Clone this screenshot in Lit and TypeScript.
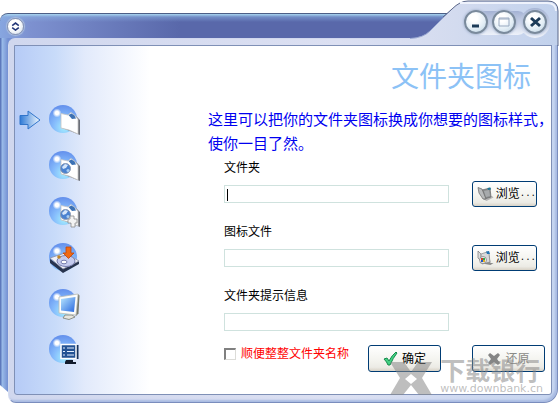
import { LitElement, html, css, svg } from "lit";
import { customElement, state } from "lit/decorators.js";

const doc = svg`
  <path d="M14 11l8 0l3 -1l4 3l3 3v15l-10 -4l-8 -3z" fill="#6b6f78"/>
  <path d="M13 9.500l7 1.500l3 -2.500l4 3l3 4v14.500l-9 -4l-8 -2z" fill="#fff" stroke="#c4c4c4" stroke-width=".8"/>
  <path d="M20.500 11l3 -1.500l3 2l1.500 3l-4 .5z" fill="#3c71b4"/>`;

const lens = svg`
  <circle cx="17.500" cy="18.500" r="5" fill="#4a82d0" stroke="#8d9bb4"/>
  <path d="M14 17l3 -3l3 1l-2 3l-3 1z" fill="#d5e6fa"/>
  <circle cx="20" cy="20.500" r="1.500" fill="#a8cdf2"/>`;

const pictures = [
  doc,
  svg`${doc}${lens}`,
  svg`${doc}${lens}
    <path d="M22 20h4v3h3v4h-2v4h-4v-4h-3v-4h2z" fill="#f3f3f3" stroke="#8a8a8a" stroke-width=".8"/>`,
  svg`
    <path d="M2 17l13 9l16 -7v3l-16 9l-13 -10z" fill="#28344e"/>
    <path d="M2 16l15 -5l14 8l-16 8z" fill="#f0f1f7" stroke="#8b90a8" stroke-width=".8"/>
    <ellipse cx="18" cy="19" rx="9" ry="5.500" fill="#c5cbee" stroke="#777eae"/>
    <ellipse cx="16" cy="20" rx="3" ry="1.800" fill="#fff" stroke="#777eae"/>
    <circle cx="11" cy="15" r="1.800" fill="#bc8428"/>
    <path d="M18 5h5v6h3l-5.500 5.500l-5.500 -5.500h3z" fill="#ef6a15" stroke="#c0440a" stroke-width=".8"/>`,
  svg`
    <path d="M30 6l1.500 1.500l-1 18l-3 3z" fill="#777a70"/>
    <path d="M17 27h7l3 2l-6 2.500l-6 -1.500z" fill="#e6e6df" stroke="#777a70" stroke-width=".8"/>
    <path d="M11 9l19 -3l-2 21l-17 -2z" fill="#fdfdfb" stroke="#bbbdb4" stroke-width=".8"/>
    <path d="M13 11l14.500 -2l-1.500 15l-13 -1.500z" fill="url(#screen)"/>`,
  svg`
    <path d="M28 11h2.500v14h-3z" fill="#17325c"/>
    <path d="M18 26h7v2h3v2h-11v-2z" fill="#111b2c"/>
    <rect x="13" y="10.500" width="15" height="14" fill="#245394" stroke="#fff" stroke-width="1.500"/>
    <path d="M15 14h2M15 17.500h2M15 21h2M19 14h7M19 17.500h7M19 21h7" stroke="#e4f0ff" stroke-width="1.200"/>`,
];

const names = ["文件夹", "图标", "图标文件", "安装", "桌面", "列表"];

@customElement("app-root")
export class AppRoot extends LitElement {
  @state() private step = 0;

  static styles = css`
    :host {
      display: block;
      background: #fff;
      color: #000;
      font: 12px/16px "Liberation Sans", "Noto Sans CJK SC", sans-serif;
    }
    * { box-sizing: border-box; }
    svg { display: block; flex: none; }
    button { font: inherit; color: inherit; padding: 0; border: 0; background: none; }
    .window {
      position: relative;
      min-height: 100vh;
      padding: 0 1px 0 8px;
      display: flex;
      flex-direction: column;
    }
    .rail {
      position: absolute;
      left: 0;
      top: 20px;
      bottom: 11px;
      width: 24px;
      background: linear-gradient(90deg, #5d79bc 0 1px, #9bbdea 2px, #738fd2 8px);
      clip-path: polygon(0 0, 100% 0, 100% 100%, 8px 100%, 0 calc(100% - 7px));
    }
    .titlebar {
      position: relative;
      height: 38px;
      margin: 0 -1px 0 -8px;
      padding-top: 13px;
      display: flex;
    }
    .strip {
      flex: 1;
      height: 25px;
      margin-right: 60px;
      padding: 4px 7px;
      border-top: 1px solid #4d5f87;
      border-radius: 8px 0 0 0;
      background:
        linear-gradient(#a9d5f0 0, #8ab1e180 3px, #8ab1e100 8px),
        linear-gradient(90deg, #87a6e0, #7d91d0 30px, #5968aa 180px);
    }
    .menu {
      display: grid;
      place-items: center;
      width: 17px;
      height: 17px;
      border-radius: 50%;
      border: 1px solid #8995b3;
      background: radial-gradient(circle at 40% 35%, #fff 40%, #cad8e8);
      box-shadow: 0 0 1px 1px #adc0df;
    }
    .tab { position: absolute; right: 0; top: 0; width: 159px; height: 46px; }
    .controls {
      position: absolute;
      right: 12px;
      top: 10px;
      display: flex;
      align-items: center;
      gap: 4px;
    }
    .round {
      display: grid;
      place-items: center;
      width: 24px;
      height: 24px;
      border-radius: 50%;
      border: 2px solid #7a8a9c;
      background: radial-gradient(circle at 40% 30%, #fff 20%, #e2edf5 60%, #b9d0e0);
      box-shadow: 0 0 2px 1px #b2bfd8;
    }
    .close { margin-left: 3px; }
    .frame {
      position: relative;
      flex: 1;
      display: flex;
      padding: 6px 5px 7px;
      border: 1px solid #7a8dbd;
      border-top-color: #d0d7ee;
      border-left-color: #d4dcf0;
      border-radius: 7px 0 14px 8px;
      background: linear-gradient(90deg, #d0d7ee, #dce0f2 60%, #c6d5f0);
      box-shadow: inset -2px -2px 2px #a9bbe2;
    }
    .panel {
      flex: 1;
      min-width: 0;
      display: flex;
      border: 1px solid #7f90b6;
      border-radius: 0 0 3px 3px;
      background: linear-gradient(90deg, #b6cbf6, #c8dbf9 40px, #e2eafb 70px, #f4f7fe 110px, #fff 135px);
    }
    .steps { flex: 0 0 130px; padding: 58px 0 10px 4px; }
    .list { list-style: none; margin: 0; padding: 0; display: grid; gap: 14px; }
    .item { display: grid; grid-template-columns: 22px 32px; gap: 7px; align-items: center; height: 32px; }
    .pick { grid-column: 2; width: 32px; height: 32px; }
    .main { flex: 1; min-width: 0; padding: 14px 14px 21px 63px; }
    .title {
      margin: 0 6px 0 0;
      font-size: 28px;
      line-height: 36px;
      font-weight: 400;
      text-align: right;
      color: #8cc2f6;
    }
    .intro { margin: 12px -16px 4px 0; font-size: 15px; line-height: 24px; color: #0000f0; }
    .form { display: grid; grid-template-columns: minmax(0, 1fr); gap: 17px; padding-left: 16px; }
    .field { display: grid; gap: 5px; }
    .row { display: flex; align-items: center; justify-content: space-between; gap: 23px; height: 26px; }
    .text {
      flex: 1;
      min-width: 0;
      height: 18px;
      padding: 0 4px;
      border: 1px solid #cfe2de;
      background: #fff;
      font: inherit;
      outline: 0;
    }
    .current { background: linear-gradient(#000, #000) 2px 3px / 1px 12px no-repeat #fff; }
    .last { padding-right: 88px; }
    .push {
      display: flex;
      align-items: center;
      justify-content: center;
      gap: 4px;
      height: 26px;
      border: 1px solid #003c74;
      border-radius: 3px;
      background: linear-gradient(#fff, #f3f3ee 60%, #ecebe5 85%, #d8d2c6);
      white-space: nowrap;
    }
    .browse { flex: 0 0 65px; justify-content: flex-start; gap: 2px; padding-left: 4px; }
    .caption { display: flex; align-items: center; }
    .dots { font: 9px/16px "Liberation Mono", monospace; }
    .footer { display: flex; align-items: center; margin: -7px -8px 0 0; }
    .wide { flex: 0 0 73px; height: 27px; }
    .wide + .wide { margin-left: 31px; }
    .wide:disabled { color: #8b8b87; }
    .check { flex: 1; display: flex; align-items: center; gap: 5px; color: #f00; height: 27px; padding-bottom: 10px; }
    .box {
      appearance: none;
      flex: none;
      width: 12px;
      height: 12px;
      margin: 0;
      border: 1px solid #dcdcd8;
      border-top: 2px solid #808080;
      border-left: 2px solid #808080;
      background: #fff;
    }
    .box:checked { background: #444; }
    .brand {
      position: absolute;
      right: 16px;
      bottom: 8px;
      display: flex;
      align-items: center;
      gap: 8px;
      color: #8888888c;
      pointer-events: none;
    }
    .name { font-size: 25px; line-height: 21px; font-weight: 700; }
    .site { font: 11px/13px "DejaVu Sans", sans-serif; }
  `;

  private ball(i: number) {
    return html`<svg width="32" height="32" viewBox="0 0 32 32" aria-hidden="true">
      <defs>
        <radialGradient id="ball" cx=".55" cy=".8" r=".85">
          <stop offset="0" stop-color="#a4efff" />
          <stop offset=".45" stop-color="#86bcfc" />
          <stop offset="1" stop-color="#5f8aea" />
        </radialGradient>
        <radialGradient id="shine">
          <stop offset=".4" stop-color="#fff" />
          <stop offset="1" stop-color="#fff" stop-opacity="0" />
        </radialGradient>
        <linearGradient id="screen" x2="1" y2="1">
          <stop offset="0" stop-color="#b8e6ff" />
          <stop offset="1" stop-color="#2868df" />
        </linearGradient>
      </defs>
      <circle cx="15" cy="15" r="14" fill="url(#ball)" />
      <circle cx="9" cy="9" r="4.5" fill="url(#shine)" />
      ${pictures[i]}
    </svg>`;
  }

  private folder(image: boolean) {
    return html`<svg width="17" height="16" viewBox="0 0 17 16" aria-hidden="true">
      ${image
        ? svg`<path d="M12 3l1.500 10l3 0l-3 2l-11 -2z" fill="#8b8b8b"/>
            <path d="M1 1l3 3v7l-3 -3z" fill="#ddd" stroke="#777" stroke-width=".7"/>
            <path d="M4 4l6 -2l2 2l1 8l-8 2z" fill="#d8dadb" stroke="#888" stroke-width=".7"/>
            <path d="M9 1.500l3 -.5l1 3l-3 0z" fill="#2273b0"/>
            <circle cx="6" cy="10" r="3.500" fill="#eee" stroke="#777" stroke-width=".7"/>
            <path d="M4 8h2v2h-2z" fill="#d03a2a"/><path d="M6 8h2v2h-2z" fill="#2eaa4c"/>
            <path d="M4 10h2v2h-2z" fill="#2658c4"/><path d="M6 10h2v2h-2z" fill="#e0b020"/>`
        : svg`<path d="M6 13l9 -3l1.500 1.500l-7 3.500z" fill="#b5b5b5"/>
            <path d="M5 4l8 -2l1 9l-7 2z" fill="#8a8d8e" stroke="#666" stroke-width=".7"/>
            <path d="M1 1.500l4 1.500l4 10l-3 0l-4 -6z" fill="#b9bbbc" stroke="#666" stroke-width=".7"/>
            <path d="M7 5l5 -1l1 6l-4 1z" fill="#a7aaac"/>
            <path d="M10.500 2l3 -.5l.5 2l-3 .5z" fill="#1b7698"/>`}
    </svg>`;
  }

  private browse(image: boolean) {
    return html`<button class="push browse" type="button">
      ${this.folder(image)}<span class="caption">浏览<span class="dots">...</span></span>
    </button>`;
  }

  render() {
    return html`
      <div class="window">
        <div class="rail"></div>
        <header class="titlebar">
          <div class="strip">
            <button class="menu" aria-label="菜单">
              <svg width="9" height="9" viewBox="0 0 9 9" fill="none" stroke="#223577" stroke-width="1.6">
                <path d="M1.2 3.6l3.3 -2.5l3.3 2.5M1.2 5.6l3.3 2.5l3.3 -2.5" />
              </svg>
            </button>
          </div>
        </header>
        <div class="frame">
          <div class="panel">
            <nav class="steps">
              <ul class="list">
                ${names.map(
                  (name, i) => html`<li class="item">
                    ${i === this.step
                      ? html`<svg width="22" height="20" viewBox="0 0 22 20" aria-hidden="true">
                          <defs><linearGradient id="arrow"><stop offset="0" stop-color="#2f7ad6" /><stop offset="1" stop-color="#f2f9ff" /></linearGradient></defs>
                          <path d="M1 5.500h8v-4.500l12 9l-12 9v-4.500h-8z" fill="url(#arrow)" stroke="#3175cb" />
                        </svg>`
                      : ""}
                    <button class="pick" aria-label=${name} @click=${() => (this.step = i)}>${this.ball(i)}</button>
                  </li>`
                )}
              </ul>
            </nav>
            <main class="main">
              <h1 class="title">文件夹图标</h1>
              <p class="intro">这里可以把你的文件夹图标换成你想要的图标样式，使你一目了然。</p>
              <form class="form" @submit=${(e: Event) => e.preventDefault()}>
                <div class="field">
                  <label for="folder">文件夹</label>
                  <div class="row"><input id="folder" class="text current" />${this.browse(false)}</div>
                </div>
                <div class="field">
                  <label for="icon">图标文件</label>
                  <div class="row"><input id="icon" class="text" />${this.browse(true)}</div>
                </div>
                <div class="field">
                  <label for="tip">文件夹提示信息</label>
                  <div class="row last"><input id="tip" class="text" /></div>
                </div>
                <div class="footer">
                  <label class="check"><input class="box" type="checkbox" />顺便整整文件夹名称</label>
                  <button class="push wide" type="submit">
                    <svg width="15" height="15" viewBox="0 0 15 15" aria-hidden="true">
                      <path d="M1 8l3 -1l2 3q3 -6 7 -9l1 1q-4 5 -7 12h-2q-1 -3 -4 -6z" fill="#43d083" stroke="#168b4c" />
                    </svg>确定
                  </button>
                  <button class="push wide" type="button" disabled>
                    <svg width="14" height="14" viewBox="0 0 14 14" aria-hidden="true">
                      <path d="M1 3l2 -2l4 3l4 -3l2 2l-3 4l3 4l-2 2l-4 -3l-4 3l-2 -2l3 -4z" fill="#858585" />
                    </svg>还原
                  </button>
                </div>
              </form>
            </main>
          </div>
        </div>
        <svg class="tab" viewBox="0 0 159 46" aria-hidden="true">
          <defs>
            <linearGradient id="metal">
              <stop offset="0" stop-color="#dadff1" />
              <stop offset=".35" stop-color="#d3dbef" />
              <stop offset="1" stop-color="#c1d1ec" />
            </linearGradient>
            <linearGradient id="well" x2="0" y2="1">
              <stop offset="0" stop-color="#a4b2d4" />
              <stop offset="1" stop-color="#eef2fa" />
            </linearGradient>
          </defs>
          <path d="M0 38.500H10Q23 38 30 31L52 9Q60 1 68 1H148Q158 1 158 11V45H0z" fill="url(#metal)" />
          <path d="M10 38.500Q23 38 30 31L52 9" fill="none" stroke="#9aa9d2" />
          <path d="M43 17L52 9Q60 1 68 1H148Q158 1 158 11V46" fill="none" stroke="#5b6789" />
          <path d="M60 3H147Q156 3 156 11" fill="none" stroke="#eef2fc" stroke-width="2" />
          <rect x="73" y="11" width="54" height="24" rx="9" fill="url(#well)" />
          <circle cx="135" cy="23" r="15" fill="url(#well)" />
          <path d="M0 45.500H152" stroke="#7f90b6" />
        </svg>
        <div class="controls">
          <button class="round" aria-label="最小化">
            <svg width="16" height="16"><path d="M4 12h7" stroke="#1c3b58" stroke-width="3" /></svg>
          </button>
          <button class="round" aria-label="最大化">
            <svg width="16" height="16"><path d="M3 4h10v8h-10zM3 5h10" fill="none" stroke="#98a9c0" /></svg>
          </button>
          <button class="round close" aria-label="关闭">
            <svg width="16" height="16"><path d="M4 4l9 8M13 4l-9 8" stroke="#1c3b58" stroke-width="3" /></svg>
          </button>
        </div>
        <div class="brand">
          <svg width="42" height="33" viewBox="0 0 42 33" fill="currentColor" aria-hidden="true">
            <path d="M0 0H14L21 10L28 0H42L32 16L42 33H29L21 23L13 33H0L10 16zM21 12L15 17L21 22L27 17z" fill-rule="evenodd" />
          </svg>
          <div>
            <div class="name">下载银行</div>
            <div class="site">www.downbank.cn</div>
          </div>
        </div>
      </div>
    `;
  }
}
